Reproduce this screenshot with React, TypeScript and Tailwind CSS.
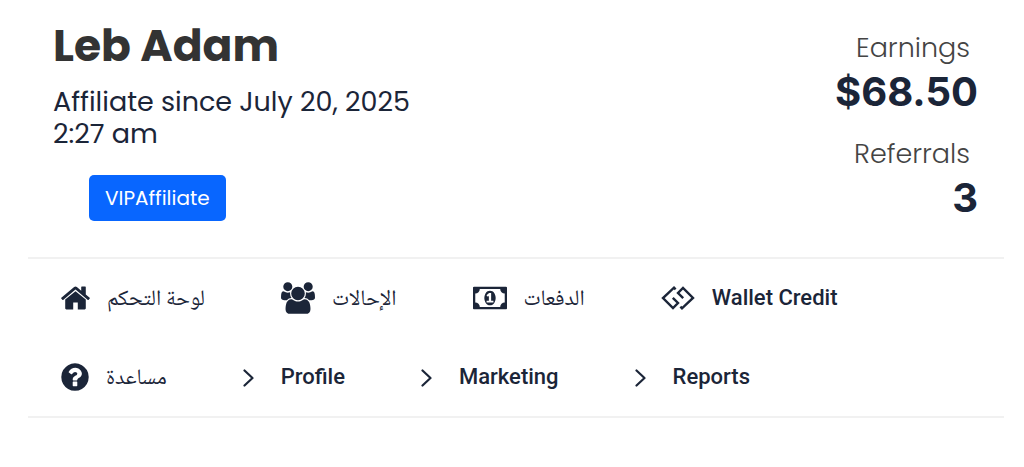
import type { ReactNode } from "react";

type NavItem = {
  label: string;
  icon: ReactNode;
  arabic?: boolean;
};

const HomeIcon = () => (
  <svg viewBox="90 0 1612 1792" className="h-8 w-[29px]" fill="currentColor" aria-hidden="true">
    <path d="M1472 992v480q0 26-19 45t-45 19h-384v-384h-256v384h-384q-26 0-45-19t-19-45v-480q0-1 .5-3t.5-3l575-474 575 474q1 2 1 6zm223-69l-62 74q-8 9-21 11h-3q-13 0-21-7l-692-577-692 577q-12 8-24 7-13-2-21-11l-62-74q-8-10-7-23.5t11-21.5l719-599q32-26 76-26t76 26l244 204v-195q0-14 9-23t23-9h192q14 0 23 9t9 23v408l219 182q10 8 11 21.5t-7 23.5z" />
  </svg>
);

const UsersIcon = () => (
  <svg viewBox="-64 0 1920 1792" className="h-8 w-[34px]" fill="currentColor" aria-hidden="true">
    <path d="M529 896q-162 5-265 128h-134q-82 0-138-40.5t-56-118.5q0-353 124-353 6 0 43.5 21t97.5 42.5 119 21.5q67 0 133-23-5 37-5 66 0 139 81 256zm1071 637q0 120-73 189.5t-194 69.5h-874q-121 0-194-69.5t-73-189.5q0-53 3.5-103.5t14-109 26.5-108.5 43-97.5 62-81 85.5-53.5 111.5-20q10 0 43 21.5t73 48 107 48 135 21.5 135-21.5 107-48 73-48 43-21.5q61 0 111.5 20t85.5 53.5 62 81 43 97.5 26.5 108.5 14 109 3.5 103.5zm-1024-1277q0 106-75 181t-181 75-181-75-75-181 75-181 181-75 181 75 75 181zm704 384q0 159-112.5 271.5t-271.5 112.5-271.5-112.5-112.5-271.5 112.5-271.5 271.5-112.5 271.5 112.5 112.5 271.5zm576 225q0 78-56 118.5t-138 40.5h-134q-103-123-265-128 81-117 81-256 0-29-5-66 66 23 133 23 59 0 119-21.5t97.5-42.5 43.5-21q124 0 124 353zm-128-609q0 106-75 181t-181 75-181-75-75-181 75-181 181-75 181 75 75 181z" />
  </svg>
);

const MoneyIcon = () => (
  <svg viewBox="0 0 1920 1792" className="h-8 w-[34px]" fill="currentColor" aria-hidden="true">
    <path d="M768 1152h384v-96h-128v-448h-114l-148 137 77 80q42-37 55-57h2v288h-128v96zm512-256q0 70-21 142t-59.5 134-101.5 101-138 39-138-39-101.5-101-59.5-134-21-142 21-142 59.5-134 101.5-101 138-39 138 39 101.5 101 59.5 134 21 142zm512 256v-512q-106 0-181-75t-75-181h-1152q0 106-75 181t-181 75v512q106 0 181 75t75 181h1152q0-106 75-181t181-75zm128-832v1152q0 26-19 45t-45 19h-1792q-26 0-45-19t-19-45v-1152q0-26 19-45t45-19h1792q26 0 45 19t19 45z" />
  </svg>
);

const WalletIcon = () => (
  <svg viewBox="0 0 34 24" className="h-6 w-[34px]" fill="none" stroke="currentColor" strokeWidth="2.4" aria-hidden="true">
    <path d="M14.6 3.4L13 1.7L2 12l10 10L17 17L11.8 11.8" />
    <path d="M19.4 20.6L21 22.3L32 12l-10-10L17 7L22.2 12.2" />
  </svg>
);

const HelpIcon = () => (
  <svg viewBox="128 0 1536 1792" className="h-8 w-7" fill="currentColor" aria-hidden="true">
    <path d="M1024 1376v-192q0-14-9-23t-23-9h-192q-14 0-23 9t-9 23v192q0 14 9 23t23 9h192q14 0 23-9t9-23zm256-672q0-88-55.5-163t-138.5-116-170-41q-243 0-371 213-15 24 8 42l132 100q7 6 19 6 16 0 25-12 53-68 86-92 34-24 86-24 48 0 85.5 26t37.5 59q0 38-20 61t-68 45q-63 28-115.5 86.5t-52.5 125.5v36q0 14 9 23t23 9h192q14 0 23-9t9-23q0-19 21.5-49.5t54.5-49.5q32-18 49-28.5t46-35 44.5-48 28-60.5 12.5-81zm384 192q0 209-103 385.5t-279.5 279.5-385.5 103-385.5-103-279.5-279.5-103-385.5 103-385.5 279.5-279.5 385.5-103 385.5 103 279.5 279.5 103 385.5z" />
  </svg>
);

const ChevronIcon = () => (
  <svg viewBox="0 0 21 32" className="h-8 w-[21px]" fill="none" stroke="currentColor" strokeWidth="2.2" strokeLinecap="round" strokeLinejoin="round" aria-hidden="true">
    <path d="M1.5 9.5l8 7.5l-8 7.5" />
  </svg>
);

const navItems: NavItem[] = [
  { label: "لوحة التحكم", icon: <HomeIcon />, arabic: true },
  { label: "الإحالات", icon: <UsersIcon />, arabic: true },
  { label: "الدفعات", icon: <MoneyIcon />, arabic: true },
  { label: "Wallet Credit", icon: <WalletIcon /> },
  { label: "مساعدة", icon: <HelpIcon />, arabic: true },
  { label: "Profile", icon: <ChevronIcon /> },
  { label: "Marketing", icon: <ChevronIcon /> },
  { label: "Reports", icon: <ChevronIcon /> },
];

const stats = [
  { label: "Earnings", value: "$68.50" },
  { label: "Referrals", value: "3" },
];

export default function App() {
  return (
    <main className="bg-white pr-5 pl-7 text-[#1b2538] font-[Poppins,Inter,sans-serif]">
      <header className="flex justify-between border-b-2 border-[#f1f1f1] pt-5 pr-[26px] pb-9 pl-[25px]">
        <div className="max-w-[400px]">
          <h1 className="text-[44px] leading-[52px] font-bold text-[#333]">Leb Adam</h1>
          <p className="mt-[14px] text-[27px] leading-8">
            Affiliate since July 20, 2025 2:27 am
          </p>
          <span className="mt-[25px] ml-9 block w-fit rounded-[5px] bg-[#0866ff] px-4 text-[20px] leading-[46px] text-white">
            VIPAffiliate
          </span>
        </div>

        <dl className="flex flex-col gap-[19px] pt-2 text-right">
          {stats.map((stat) => (
            <div key={stat.label}>
              <dt className="pr-2 text-[27px] leading-10 font-light text-[#444]">{stat.label}</dt>
              <dd className="font-[Inter,sans-serif] text-[40px] leading-[47px] font-bold">
                {stat.value}
              </dd>
            </div>
          ))}
        </dl>
      </header>

      <nav className="border-b-2 border-[#f1f1f1] py-[21px] pr-8 pl-[33px]">
        <ul className="flex flex-wrap gap-x-[76px] gap-y-[43px]">
          {navItems.map((item) => (
            <li key={item.label}>
              <a href="#" className="flex h-9 items-center gap-[17px]">
                {item.icon}
                {item.arabic ? (
                  <span lang="ar" dir="rtl" className="pt-1 font-['Noto_Naskh_Arabic','DejaVu_Sans',sans-serif] text-[22px] leading-8">
                    {item.label}
                  </span>
                ) : (
                  <span className="font-[Roboto,sans-serif] text-[22px] leading-8 font-medium">{item.label}</span>
                )}
              </a>
            </li>
          ))}
        </ul>
      </nav>
    </main>
  );
}
